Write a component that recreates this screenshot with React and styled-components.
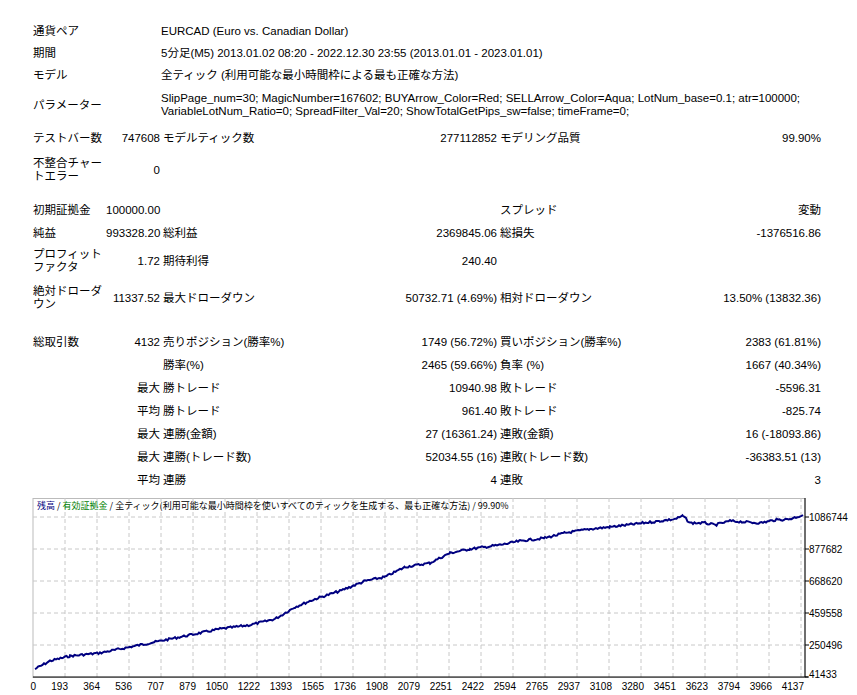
import React from 'react';
import styled, { createGlobalStyle } from 'styled-components';

const GlobalStyle = createGlobalStyle`
  body {
    margin: 0;
    background: #fff;
    font-family: "Liberation Sans", "Noto Sans CJK JP", sans-serif;
    font-size: 11.5px;
    color: #000;
  }
`;

const Page = styled.div`
  width: 857px;
  height: 695px;
  padding-top: 20px;
  box-sizing: border-box;
  overflow: hidden;
`;

const Report = styled.div`
  margin-left: 33px;
  width: 785px;
`;

const Row = styled.div`
  display: grid;
  grid-template-columns: 70px 54px 334px 321px;
  column-gap: 3px;
  align-items: center;
  height: ${(p) => p.h || 22}px;
  line-height: 13px;
`;

const Spacer = styled.div`
  height: ${(p) => p.h}px;
`;

const Label = styled.div`
  white-space: ${(p) => (p.wrap ? 'normal' : 'nowrap')};
`;

const Value = styled.div`
  text-align: right;
  white-space: nowrap;
`;

const Wide = styled.div`
  grid-column: 2 / 5;
  padding-left: 55px;
  line-height: 13px;
  white-space: nowrap;
`;

const Pair = styled.div`
  display: flex;
  justify-content: space-between;
  white-space: nowrap;
`;

const ChartWrap = styled.div`
  margin-top: 6px;
`;

function InfoRow({ label, children, h }) {
  return (
    <Row h={h}>
      <Label>{label}</Label>
      <Wide>{children}</Wide>
    </Row>
  );
}

function StatRow({ h, cells }) {
  const [l1, v1, l2, v2, l3, v3] = cells;
  return (
    <Row h={h}>
      <Label wrap>{l1}</Label>
      <Value>{v1}</Value>
      <Pair>
        <span>{l2}</span>
        <span>{v2}</span>
      </Pair>
      <Pair>
        <span>{l3}</span>
        <span>{v3}</span>
      </Pair>
    </Row>
  );
}

const xLabels = [0, 193, 364, 536, 707, 879, 1050, 1222, 1393, 1565, 1736, 1908, 2079, 2251, 2422, 2594, 2765, 2937, 3108, 3280, 3451, 3623, 3794, 3966, 4137];
const yLabels = [1086744, 877682, 668620, 459558, 250496, 41433];

const keys = [
  [35, 668], [50, 660], [70, 655], [100, 652], [130, 646], [160, 640], [190, 634], [220, 628],
  [250, 624], [275, 618], [295, 606], [315, 598], [340, 590], [365, 580], [385, 576], [405, 566],
  [430, 562], [450, 552], [470, 548], [500, 544], [520, 540], [545, 537], [565, 532], [590, 528],
  [610, 526], [635, 523], [660, 520], [675, 518], [683, 515], [690, 522], [705, 522], [715, 524],
  [730, 520], [745, 521], [760, 522], [775, 519], [790, 518], [803, 514],
];

function buildLine() {
  const pts = [];
  let seed = 7;
  const rnd = () => {
    seed = (seed * 9301 + 49297) % 233280;
    return seed / 233280;
  };
  for (let i = 0; i < keys.length - 1; i++) {
    const [x0, y0] = keys[i];
    const [x1, y1] = keys[i + 1];
    for (let x = x0; x < x1; x += 1.5) {
      const t = (x - x0) / (x1 - x0);
      pts.push(`${x.toFixed(1)},${(y0 - 497 + (y1 - y0) * t + (rnd() - 0.5) * 2.2).toFixed(1)}`);
    }
  }
  pts.push('803,17');
  return pts.join(' ');
}

function Chart() {
  const left = 33;
  const right = 805;
  const bottom = 179;
  return (
    <svg width="857" height="198" style={{ display: 'block' }}>
      <rect x={left} y={0.5} width={right - left} height={bottom} fill="#fff" stroke="#bbb" />
      {[19, 51, 83, 115, 147].map((y) => (
        <line key={y} x1={left} x2={right} y1={y} y2={y} stroke="#c8c8c8" strokeDasharray="4 3" />
      ))}
      {xLabels.slice(1).map((_, i) => {
        const x = left + 32 * (i + 1);
        return <line key={x} x1={x} x2={x} y1={0} y2={bottom} stroke="#c8c8c8" strokeDasharray="4 3" />;
      })}
      <line x1={right} x2={right} y1={0} y2={bottom} stroke="#000" />
      <line x1={left} x2={right + 3} y1={bottom} y2={bottom} stroke="#000" />
      <polyline points={buildLine()} fill="none" stroke="#000080" strokeWidth="2" />
      <text x={37} y={11} fontSize="9" fontFamily="Noto Sans CJK JP, sans-serif">
        <tspan fill="#000080">残高</tspan>
        <tspan fill="#000"> / </tspan>
        <tspan fill="#008000">有効証拠金</tspan>
        <tspan fill="#000"> / 全ティック(利用可能な最小時間枠を使いすべてのティックを生成する、最も正確な方法) / 99.90%</tspan>
      </text>
      {yLabels.map((v, i) => (
        <g key={v}>
          <line x1={right} x2={right + 4} y1={19 + 32 * i} y2={19 + 32 * i} stroke="#000" />
          <text x={809} y={23 + 32 * i - (i === 5 ? 3 : 0)} fontSize="10" fontFamily="Liberation Sans, sans-serif" fill="#000">{v}</text>
        </g>
      ))}
      {xLabels.map((v, i) => (
        <text key={v} x={left + 32 * i + 3} y={192} fontSize="10" textAnchor="end" fontFamily="Liberation Sans, sans-serif" fill="#000">{v}</text>
      ))}
    </svg>
  );
}

export default function App() {
  return (
    <Page>
      <GlobalStyle />
      <Report>
        <InfoRow label="通貨ペア">EURCAD (Euro vs. Canadian Dollar)</InfoRow>
        <InfoRow label="期間">5分足(M5) 2013.01.02 08:20 - 2022.12.30 23:55 (2013.01.01 - 2023.01.01)</InfoRow>
        <InfoRow label="モデル">全ティック (利用可能な最小時間枠による最も正確な方法)</InfoRow>
        <InfoRow label="パラメーター" h={38}>
          SlipPage_num=30; MagicNumber=167602; BUYArrow_Color=Red; SELLArrow_Color=Aqua; LotNum_base=0.1; atr=100000;
          <br />
          VariableLotNum_Ratio=0; SpreadFilter_Val=20; ShowTotalGetPips_sw=false; timeFrame=0;
        </InfoRow>
        <StatRow h={28} cells={['テストバー数', '747608', 'モデルティック数', '277112852', 'モデリング品質', '99.90%']} />
        <StatRow h={36} cells={['不整合チャートエラー', '0', '', '', '', '']} />
        <Spacer h={10} />
        <StatRow h={24} cells={['初期証拠金', '100000.00', '', '', 'スプレッド', '変動']} />
        <StatRow h={22} cells={['純益', '993328.20', '総利益', '2369845.06', '総損失', '-1376516.86']} />
        <StatRow h={34} cells={['プロフィットファクタ', '1.72', '期待利得', '240.40', '', '']} />
        <StatRow h={40} cells={['絶対ドローダウン', '11337.52', '最大ドローダウン', '50732.71 (4.69%)', '相対ドローダウン', '13.50% (13832.36)']} />
        <Spacer h={12} />
        <StatRow h={24} cells={['総取引数', '4132', '売りポジション(勝率%)', '1749 (56.72%)', '買いポジション(勝率%)', '2383 (61.81%)']} />
        <StatRow h={23} cells={['', '', '勝率(%)', '2465 (59.66%)', '負率 (%)', '1667 (40.34%)']} />
        <StatRow h={23} cells={['', '最大', '勝トレード', '10940.98', '敗トレード', '-5596.31']} />
        <StatRow h={23} cells={['', '平均', '勝トレード', '961.40', '敗トレード', '-825.74']} />
        <StatRow h={23} cells={['', '最大', '連勝(金額)', '27 (16361.24)', '連敗(金額)', '16 (-18093.86)']} />
        <StatRow h={23} cells={['', '最大', '連勝(トレード数)', '52034.55 (16)', '連敗(トレード数)', '-36383.51 (13)']} />
        <StatRow h={23} cells={['', '平均', '連勝', '4', '連敗', '3']} />
      </Report>
      <ChartWrap>
        <Chart />
      </ChartWrap>
    </Page>
  );
}
